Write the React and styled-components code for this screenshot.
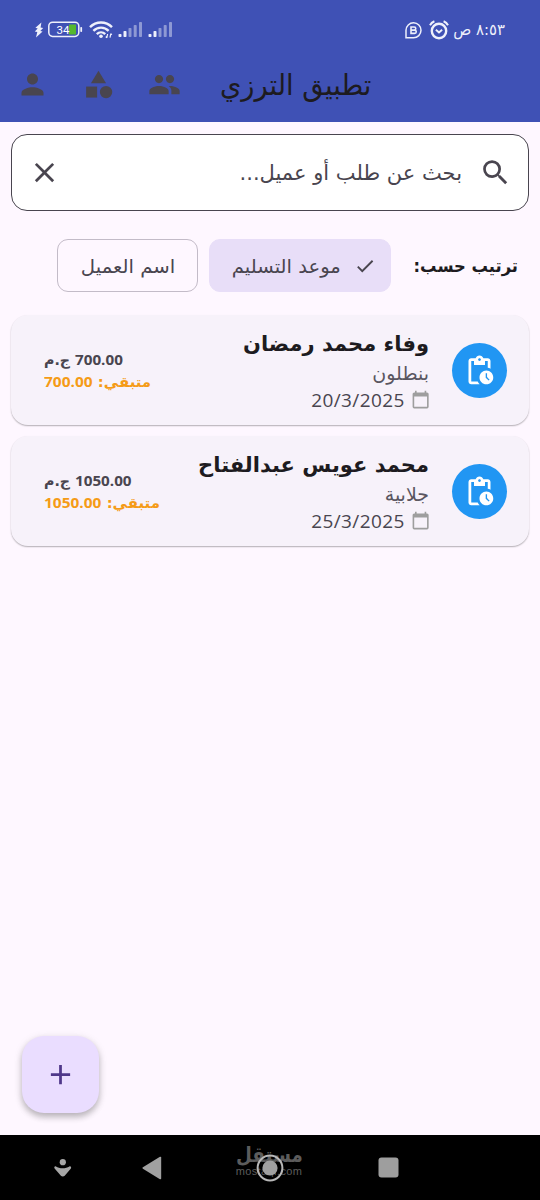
import React from "react";
import styled, { createGlobalStyle } from "styled-components";
import {
  MdAdd,
  MdCalendarToday,
  MdCategory,
  MdCheck,
  MdClose,
  MdPendingActions,
  MdPeople,
  MdPerson,
  MdSearch
} from "react-icons/md";

const GlobalStyle = createGlobalStyle`
  body {
    margin: 0;
    background-color: #fef7ff;
    font-family: "DejaVu Sans", "Noto Sans", sans-serif;
  }

  * {
    box-sizing: border-box;
  }

  svg {
    display: block;
    flex-shrink: 0;
  }
`;

const Screen = styled.div`
  width: 540px;
  height: 1200px;
  display: flex;
  flex-direction: column;
  background-color: #fef7ff;
  overflow: hidden;
`;

const Header = styled.header`
  height: 122px;
  background-color: #3f51b5;
`;

const StatusBar = styled.div`
  height: 59px;
  padding: 0 35px 0 34px;
  display: flex;
  justify-content: space-between;
  align-items: center;
  color: #eef0fb;
`;

const StatusGroup = styled.div`
  display: flex;
  align-items: center;
  gap: ${props => props.$gap}px;
`;

const AppBar = styled.div`
  height: 50px;
  padding-left: 16px;
  display: flex;
  align-items: center;
  color: #49454f;
`;

const Actions = styled.nav`
  width: 204px;
  display: flex;
  gap: 33px;
`;

const Title = styled.div`
  padding-top: 2px;
`;

const Text = styled.span`
  display: block;
  width: ${props => (props.$width ? `${props.$width}px` : "auto")};
  height: ${props => props.$line}px;
  line-height: ${props => props.$line}px;
  font-size: ${props => props.$size}px;
  font-weight: ${props => (props.$bold ? 700 : 400)};
  color: ${props => props.$color};
  white-space: nowrap;
  direction: rtl;
  transform: scaleX(${props => props.$stretch || 1});
  transform-origin: ${props => props.$origin || "right"};
`;

const Numeral = styled.span`
  font-family: "Open Sans", "Noto Sans", sans-serif;
  font-size: ${props => props.$size}px;
  letter-spacing: ${props => props.$spacing || 0}px;
`;

const SearchField = styled.div`
  height: 77px;
  margin: 12px 11px 0;
  padding: 0 16px;
  display: flex;
  align-items: center;
  direction: rtl;
  background-color: #ffffff;
  border: 1.4px solid #49454f;
  border-radius: 16px;
  color: #49454f;
`;

const Hint = styled.div`
  flex: 1;
  padding-right: 17px;
`;

const SortRow = styled.div`
  height: 53px;
  margin: 28px 22px 0;
  display: flex;
  align-items: center;
  direction: rtl;
`;

const SortLabel = styled.div`
  width: 127px;
`;

const Chip = styled.button`
  width: ${props => props.$width}px;
  height: 53px;
  margin: 0 0 0 11px;
  padding: 0 ${props => (props.$selected ? 14 : 22)}px;
  display: flex;
  align-items: center;
  gap: 13px;
  direction: rtl;
  font-family: inherit;
  color: #49454f;
  background-color: ${props => (props.$selected ? "#e8def8" : "transparent")};
  border: 1.4px solid ${props => (props.$selected ? "#e8def8" : "#c3bbc8")};
  border-radius: 11px;
`;

const List = styled.main`
  flex: 1;
  padding: 23px 11px 0;
  display: flex;
  flex-direction: column;
  gap: 11px;
`;

const Card = styled.article`
  height: 110px;
  padding: 0 22px 0 33px;
  display: flex;
  align-items: center;
  direction: rtl;
  background-color: #f7f2fa;
  border-radius: 17px;
  box-shadow: 0 1px 1.5px rgba(0, 0, 0, 0.26), 0 1px 2px rgba(0, 0, 0, 0.05);
`;

const Avatar = styled.div`
  width: 55px;
  height: 55px;
  display: flex;
  justify-content: center;
  align-items: center;
  border-radius: 50%;
  background-color: #2196f3;
  color: #ffffff;
`;

const Details = styled.div`
  flex: 1;
  padding: 3px 23px 0 0;
`;

const DateRow = styled.div`
  height: 26px;
  display: flex;
  align-items: center;
  gap: 6px;
  color: #9e9e9e;

  svg {
    margin-right: -1px;
  }
`;

const Amounts = styled.div`
  height: 45px;
  display: flex;
  flex-direction: column;
  align-items: flex-end;
`;

const FabArea = styled.div`
  padding: 0 22px 22px;
`;

const Fab = styled.button`
  width: 77px;
  height: 77px;
  padding: 0;
  display: flex;
  justify-content: center;
  align-items: center;
  border: none;
  border-radius: 22px;
  color: #4f378a;
  background-color: #eaddff;
  box-shadow: 0 4px 6px rgba(0, 0, 0, 0.22), 0 2px 10px rgba(0, 0, 0, 0.1);
`;

const NavBar = styled.footer`
  position: relative;
  z-index: 0;
  height: 65px;
  padding-left: 53px;
  display: grid;
  grid-template-columns: 89px 114px 122px 21px;
  align-items: center;
  background-color: #000000;
`;

const Watermark = styled.div`
  position: absolute;
  z-index: -1;
  left: 236px;
  top: 10px;
  width: 66px;
  display: flex;
  flex-direction: column;
  align-items: center;
  color: #5c5c5c;
`;

const Domain = styled.div`
  font-family: "Liberation Sans", sans-serif;
  font-size: 11px;
  line-height: 12px;
  letter-spacing: 0.4px;
`;

const orders = [
  {
    name: "وفاء محمد رمضان",
    item: "بنطلون",
    itemStretch: 1,
    date: "20/3/2025",
    amount: "700.00"
  },
  {
    name: "محمد عويس عبدالفتاح",
    item: "جلابية",
    itemStretch: 1,
    date: "25/3/2025",
    amount: "1050.00"
  }
];

const BoltIcon = () => (
  <svg width="10" height="16" viewBox="0 0 10 16" fill="currentColor">
    <path d="M7.4 0.4 1.4 5.8l2.3.8L0.8 9.4l2.5.7L2 15.4 8.6 9.6 6.3 8.9 9.2 6.1 6.6 5.4Z" />
  </svg>
);

const BatteryIcon = () => (
  <svg width="35" height="17" viewBox="0 0 35 17">
    <rect x="21" y="3.5" width="7" height="10" fill="#55b82e" />
    <rect
      x="0.8"
      y="1.2"
      width="30"
      height="14.2"
      rx="3.8"
      fill="none"
      stroke="#eef0fb"
      strokeWidth="1.5"
    />
    <rect x="32.3" y="6" width="1.8" height="5" rx="0.8" fill="#eef0fb" />
    <text
      x="15"
      y="12.5"
      fontSize="11.5"
      fontFamily="Roboto"
      textAnchor="middle"
      fill="#ffffff"
    >
      34
    </text>
  </svg>
);

const WifiIcon = () => (
  <svg width="24" height="19" viewBox="0 0 24 19">
    <g fill="none" stroke="#eef0fb" strokeWidth="2.4">
      <path d="M1 7.2C7.2 0.9 16.8 0.9 23 7.2" />
      <path d="M4.4 10.8c4.2-4.3 11-4.3 15.2 0" />
      <path d="M7.8 14.2c2.4-2.4 6-2.4 8.4 0" />
    </g>
    <circle cx="12" cy="16.3" r="1.8" fill="#eef0fb" />
    <path
      d="M18.6 14 17.8 17.8M21.8 13.6 21 17.6M17.8 17.8l-1-1.2M21.8 13.6l1 1.2"
      stroke="#eef0fb"
      strokeWidth="1.2"
      fill="none"
    />
  </svg>
);

const SignalIcon = () => (
  <svg width="25" height="17" viewBox="0 0 25 17" fill="#eef0fb">
    <rect x="0.5" y="13" width="3" height="3" rx="0.8" />
    <rect x="5.5" y="10" width="3" height="6" rx="0.8" />
    <g opacity="0.45">
      <rect x="10.5" y="7" width="3" height="9" rx="0.8" />
      <rect x="15.7" y="4" width="3" height="12" rx="0.8" />
      <rect x="21" y="1" width="3" height="15" rx="0.8" />
    </g>
  </svg>
);

const ChatBadgeIcon = () => (
  <svg width="17" height="18" viewBox="0 0 17 18" fill="none" stroke="#eef0fb">
    <path d="M1 16.8V9.2A7.5 7.5 0 1 1 8.5 16.8Z" strokeWidth="1.5" />
    <path
      d="M6 6h3.2a1.5 1.5 0 0 1 0 3.1H6ZM6 9.1h3.6a1.6 1.6 0 0 1 0 3.3H6Z"
      strokeWidth="1.6"
    />
  </svg>
);

const AlarmIcon = () => (
  <svg width="20" height="20" viewBox="0 0 20 20" fill="none" stroke="#eef0fb">
    <circle cx="10" cy="11" r="7.2" strokeWidth="2.4" />
    <path d="M6.9 9.7 10 12.4l3.1-2.7" strokeWidth="2" />
    <path d="M1 5.2C2 3.2 3.4 2 5.4 1.2M19 5.2c-1-2-2.4-3.2-4.4-4" strokeWidth="2" />
  </svg>
);

const OneHandIcon = () => (
  <svg width="19" height="20" viewBox="0 0 19 20" fill="#a6a6a6">
    <circle cx="9.8" cy="4.2" r="3.1" />
    <path d="M3 8.4c3.2 2.4 10 2.4 13.4 0 1.4-.5 2.2.9 1.5 2.2l-6.2 7.1c-1 1.1-2.8 1.1-3.8 0l-6.3-7.1c-.8-1.3 0-2.7 1.4-2.2Z" />
  </svg>
);

const BackIcon = () => (
  <svg width="20" height="24" viewBox="0 0 20 24" fill="#a0a0a0">
    <path d="M18 .8c.7-.4 1.2 0 1.2.7v21c0 .7-.5 1.1-1.2.7L.9 12.7c-.6-.4-.6-1 0-1.4Z" />
  </svg>
);

const HomeIcon = () => (
  <svg width="28" height="28" viewBox="0 0 28 28">
    <circle cx="14" cy="14" r="12.4" fill="none" stroke="#b8b8b8" strokeWidth="2" />
    <circle cx="14" cy="14" r="7.6" fill="#a0a0a0" />
  </svg>
);

const RecentsIcon = () => (
  <svg width="21" height="21" viewBox="0 0 21 21">
    <rect x="0.5" y="0.5" width="20" height="20" rx="3" fill="#9e9e9e" />
  </svg>
);

const OrderCard = ({ order }) => (
  <Card>
    <Avatar>
      <MdPendingActions size={33} />
    </Avatar>
    <Details>
      <Text $size={21} $line={29} $bold $color="#1d1b20">
        {order.name}
      </Text>
      <Text $size={19} $line={28} $color="#5a5660" $stretch={order.itemStretch}>
        {order.item}
      </Text>
      <DateRow>
        <MdCalendarToday size={19.25} />
        <Text $size={19} $line={26} $color="#49454f">
          <Numeral $size={19} $spacing={0.4}>
            {order.date}
          </Numeral>
        </Text>
      </DateRow>
    </Details>
    <Amounts>
      <Text $size={14} $line={22} $bold $color="#49454f" $origin="left" $stretch={1.015}>
        <Numeral $size={15} $spacing={0.35}>
          {order.amount}
        </Numeral>{" "}
        ج.م
      </Text>
      <Text $size={14.5} $line={22} $bold $color="#f59b16" $origin="left" $stretch={1.03}>
        متبقي:{" "}
        <Numeral $size={15} $spacing={0.4}>
          {order.amount}
        </Numeral>
      </Text>
    </Amounts>
  </Card>
);

const App = () => (
  <Screen>
    <GlobalStyle />
    <Header>
      <StatusBar>
        <StatusGroup $gap={6}>
          <StatusGroup $gap={4}>
            <BoltIcon />
            <BatteryIcon />
          </StatusGroup>
          <StatusGroup $gap={5}>
            <WifiIcon />
            <SignalIcon />
            <SignalIcon />
          </StatusGroup>
        </StatusGroup>
        <StatusGroup $gap={4}>
          <StatusGroup $gap={7}>
            <ChatBadgeIcon />
            <AlarmIcon />
          </StatusGroup>
          <Text $size={16} $line={22} $width={52} $color="#eef0fb" $stretch={0.93}>
            ٨:٥٣ ص
          </Text>
        </StatusGroup>
      </StatusBar>
      <AppBar>
        <Actions>
          <MdPerson size={33} />
          <MdCategory size={33} />
          <MdPeople size={33} />
        </Actions>
        <Title>
          <Text $size={29} $line={50} $color="#1d1b20" $origin="left" $stretch={0.94}>
            تطبيق الترزي
          </Text>
        </Title>
      </AppBar>
    </Header>
    <SearchField>
      <MdSearch size={33} />
      <Hint>
        <Text $size={21} $line={34} $color="#49454f">
          بحث عن طلب أو عميل...
        </Text>
      </Hint>
      <MdClose size={33} />
    </SearchField>
    <SortRow>
      <SortLabel>
        <Text $size={17.5} $line={30} $bold $color="#1d1b20" $stretch={0.935}>
          ترتيب حسب:
        </Text>
      </SortLabel>
      <Chip $width={182} $selected>
        <MdCheck size={22} />
        <Text $size={19} $line={30} $color="#49454f" $stretch={1.03}>
          موعد التسليم
        </Text>
      </Chip>
      <Chip $width={141}>
        <Text $size={19} $line={30} $color="#49454f" $stretch={1.035}>
          اسم العميل
        </Text>
      </Chip>
    </SortRow>
    <List>
      {orders.map(order => (
        <OrderCard key={order.name} order={order} />
      ))}
    </List>
    <FabArea>
      <Fab>
        <MdAdd size={33} />
      </Fab>
    </FabArea>
    <NavBar>
      <OneHandIcon />
      <BackIcon />
      <HomeIcon />
      <RecentsIcon />
      <Watermark>
        <Text $size={21} $line={20} $bold $color="#5c5c5c" $origin="center" $stretch={0.87}>
          مستقل
        </Text>
        <Domain>mostaql.com</Domain>
      </Watermark>
    </NavBar>
  </Screen>
);

export default App;
